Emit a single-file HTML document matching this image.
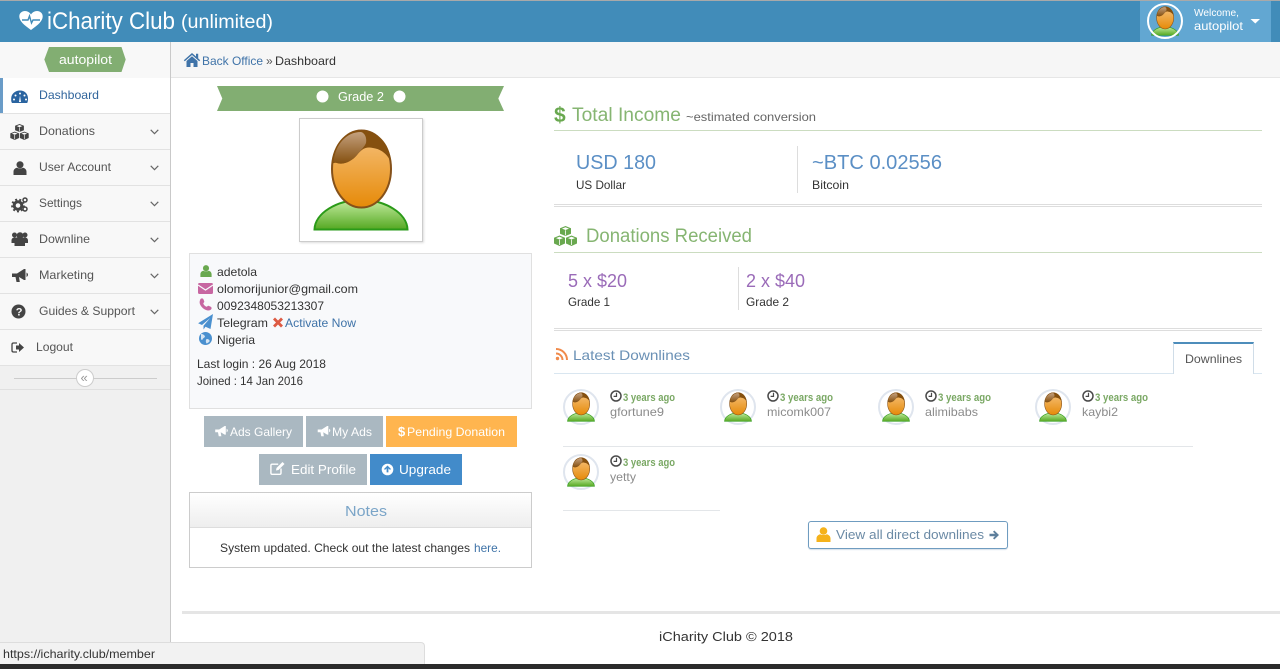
<!DOCTYPE html>
<html lang="en"><head><meta charset="utf-8"><title>iCharity Club</title>
<style>
html,body{margin:0;padding:0;width:1280px;height:669px;overflow:hidden;background:#fff}
.b{position:absolute;box-sizing:border-box}
svg.o{position:absolute;left:0;top:0}
text{font-family:"Liberation Sans",sans-serif;font-size:12px;fill:#333}
.side{fill:#555}.w{fill:#fff}.link{fill:#3f73a8}
.ago{font-size:11px;font-weight:bold;fill:#7aa864}.nm{fill:#8b8b8b}
</style></head><body>
<div class="b" style="left:0;top:0;width:1280px;height:1px;background:#a9a9a9"></div>
<div class="b" style="left:0;top:1px;width:1280px;height:41px;background:#418cb9"></div>
<div class="b" style="left:1140px;top:1px;width:131px;height:41px;background:#62a7d2"></div>
<div class="b" style="left:0;top:42px;width:171px;height:622px;background:#f0f0f0;border-right:1px solid #c9c9c9"></div>
<div class="b" style="left:0;top:42px;width:170px;height:348px;background:#f8f8f8"></div>
<div class="b" style="left:0;top:78px;width:170px;height:36px;background:#fff;border-left:3px solid #6a9cc8;border-bottom:1px solid #e2e2e2"></div>
<div class="b" style="left:0;top:149px;width:170px;height:1px;background:#e2e2e2"></div>
<div class="b" style="left:0;top:113px;width:170px;height:1px;background:#e2e2e2"></div>
<div class="b" style="left:0;top:185px;width:170px;height:1px;background:#e2e2e2"></div>
<div class="b" style="left:0;top:221px;width:170px;height:1px;background:#e2e2e2"></div>
<div class="b" style="left:0;top:257px;width:170px;height:1px;background:#e2e2e2"></div>
<div class="b" style="left:0;top:293px;width:170px;height:1px;background:#e2e2e2"></div>
<div class="b" style="left:0;top:329px;width:170px;height:1px;background:#e2e2e2"></div>
<div class="b" style="left:0;top:365px;width:170px;height:25px;background:#f0f0f0;border-top:1px solid #e2e2e2;border-bottom:1px solid #e0e0e0"></div>
<div class="b" style="left:171px;top:42px;width:1109px;height:36px;background:#f6f6f6;border-bottom:1px solid #e6e6e6"></div>
<div class="b" style="left:299px;top:118px;width:124px;height:124px;background:#fff;border:1px solid #ccc;box-shadow:1px 1px 2px #ddd"></div>
<div class="b" style="left:189px;top:253px;width:343px;height:156px;background:#f8f9fb;border:1px solid #e0e0e0"></div>
<div class="b" style="left:204px;top:416px;width:99px;height:31px;background:#aab8c1"></div>
<div class="b" style="left:306px;top:416px;width:77px;height:31px;background:#aab8c1"></div>
<div class="b" style="left:386px;top:416px;width:131px;height:31px;background:#ffb54f"></div>
<div class="b" style="left:259px;top:454px;width:108px;height:31px;background:#aab8c1"></div>
<div class="b" style="left:370px;top:454px;width:92px;height:31px;background:#428bca"></div>
<div class="b" style="left:189px;top:492px;width:343px;height:76px;background:#fff;border:1px solid #ccc"></div>
<div class="b" style="left:190px;top:493px;width:341px;height:35px;background:linear-gradient(#fff,#eee);border-bottom:1px solid #ddd"></div>
<div class="b" style="left:554px;top:130px;width:708px;height:1px;background:#cbdcc0"></div>
<div class="b" style="left:554px;top:204px;width:708px;height:3px;border-top:1px solid #ddd;border-bottom:1px solid #ddd"></div>
<div class="b" style="left:797px;top:146px;width:1px;height:47px;background:#ddd"></div>
<div class="b" style="left:554px;top:252px;width:708px;height:1px;background:#cbdcc0"></div>
<div class="b" style="left:554px;top:328px;width:708px;height:3px;border-top:1px solid #ddd;border-bottom:1px solid #ddd"></div>
<div class="b" style="left:738px;top:267px;width:1px;height:43px;background:#ddd"></div>
<div class="b" style="left:554px;top:373px;width:708px;height:1px;background:#d9e6f0"></div>
<div class="b" style="left:1173px;top:342px;width:81px;height:32px;background:#fff;border:1px solid #d0dde8;border-top:2px solid #4d8dbb;border-bottom:0"></div>
<div class="b" style="left:563px;top:446px;width:630px;height:1px;background:#e3e6e9"></div>
<div class="b" style="left:563px;top:510px;width:157px;height:1px;background:#e3e6e9"></div>
<div class="b" style="left:808px;top:521px;width:200px;height:28px;background:#fff;border:1px solid #6f9cc0;border-radius:3px;box-shadow:0 1px 1px #d5dfe8"></div>
<div class="b" style="left:182px;top:611px;width:1098px;height:3px;background:#e5e5e5"></div>
<div class="b" style="left:0;top:642px;width:425px;height:23px;background:#f2f2f2;border:1px solid #ddd;border-left:0;border-bottom:0;border-radius:0 4px 0 0"></div>
<div class="b" style="left:0;top:664px;width:1280px;height:5px;background:#2b2b2b"></div>

<svg class="o" width="1280" height="669" viewBox="0 0 1280 669" xmlns="http://www.w3.org/2000/svg">
<defs>
<linearGradient id="face" x1="0" y1="0" x2="0" y2="1"><stop offset="0" stop-color="#f6c27e"/><stop offset="1" stop-color="#e68a08"/></linearGradient>
<linearGradient id="shirt" x1="0" y1="0" x2="0" y2="1"><stop offset="0" stop-color="#c4eca0"/><stop offset="1" stop-color="#55a822"/></linearGradient>
<linearGradient id="hair" x1="0" y1="0" x2="0" y2="1"><stop offset="0" stop-color="#c4a07e"/><stop offset="1" stop-color="#85500f"/></linearGradient>
<symbol id="av" viewBox="0 0 124 124">
<path d="M15.500 111.500C16 95 38 82 62 82s46 13 46.500 29.500z" fill="url(#shirt)" stroke="#2a9a18" stroke-width="2"/>
<ellipse cx="62.500" cy="51" rx="29.500" ry="38.500" fill="url(#face)" stroke="#85511a" stroke-width="2"/>
<path d="M33 46C34 26 46 12.500 62.500 12.500 79 12.500 91 26 92 44 88 36 82 31 74 30 66 28 62 32 58 37 52 44 44 47 38 45 36 44.500 34 45 33 46z" fill="#85500f"/>
<path d="M34.500 44C36 27 47 14 62 14 66 15 68 20 67 25 66 28 62 32 58 37 52 44 44 47 38 45z" fill="url(#hair)"/>
</symbol>
<symbol id="cubes" viewBox="0 0 24 20">
<path d="M12 0l5.500 2.200v5.600L12 10 6.500 7.800V2.200zM6 9.500l5.500 2.200v5.800L6 20 .5 17.500v-5.800zM18 9.500l5.500 2.200v5.800L18 20l-5.500-2.500v-5.800z"/>
<path d="M12 1.300l3.500 1.300L12 4 8.500 2.600zM6 10.800l3.500 1.300L6 13.500 2.500 12.100zM18 10.800l3.500 1.300L18 13.500l-3.500-1.400z" fill="#fff"/>
<path d="M12 4.300v5M6 13.800V19M18 13.800V19" fill="none" stroke="#fff" stroke-width=".8"/>
</symbol>
<symbol id="user" viewBox="0 0 14 15"><circle cx="7" cy="4" r="3.800"/><path d="M0 15v-3.500C0 9 2 7.500 3.800 7.200 5 8.200 9 8.200 10.200 7.200 12 7.500 14 9 14 11.500V15z"/></symbol>
<symbol id="horn" viewBox="0 0 16 14"><path d="M0 4.500h5L12 0h1.500v11H12L7 8l.8 5H4.500L3.500 8H0z"/><path d="M14.500 3.500c2 1 2 3.500 0 4.500z"/></symbol>
<symbol id="clock" viewBox="0 0 12 12"><circle cx="6" cy="6" r="5" fill="none" stroke="#4a4a4a" stroke-width="1.500"/><path d="M6.500 2.800v3.600H3.600" fill="none" stroke="#4a4a4a" stroke-width="1.200"/></symbol>
<symbol id="chev" viewBox="0 0 9 6"><path d="M.7 .8L4.500 4.700 8.300 .8" fill="none" stroke="#666" stroke-width="1.200"/></symbol>
</defs>

<!-- header -->
<path d="M31 30C24 25 19.300 21 19.300 16.500 19.300 13 22 11 25 11 27.500 11 29.800 12.500 31 14.500 32.200 12.500 34.500 11 37 11 40 11 42.700 13 42.700 16.500 42.700 21 38 25 31 30z" fill="#fff"/>
<path d="M22 20h6l1.500-4 2 7 1.500-3h7" fill="none" stroke="#418cb9" stroke-width="1.400"/>
<text x="47" y="29" textLength="128" lengthAdjust="spacingAndGlyphs" class="w" style="font-size:24px">iCharity Club</text>
<text x="181" y="28" textLength="92" lengthAdjust="spacingAndGlyphs" class="w" style="font-size:19px">(unlimited)</text>
<use href="#av" x="1147" y="3" width="36" height="36"/>
<circle cx="1165" cy="21" r="17" fill="none" stroke="#fff" stroke-width="2"/>
<text x="1194" y="16" textLength="45" lengthAdjust="spacingAndGlyphs" class="w" style="font-size:10px">Welcome,</text>
<text x="1194" y="30" textLength="49" lengthAdjust="spacingAndGlyphs" class="w" style="font-size:12px">autopilot</text>
<path d="M1250.500 19h9.500l-4.700 4.500z" fill="#fff"/>

<!-- sidebar -->
<path d="M44.300 59.500L49 47h72.500l4.200 12.500-4.200 12.500H49z" fill="#82ae72"/>
<text x="59" y="64" textLength="53" lengthAdjust="spacingAndGlyphs" class="w" style="font-size:13px">autopilot</text>
<path d="M12 103c-1-1.500-.8-3-.8-4.500C11.200 94 15 90.500 20 90.500s8 3.500 8 8c0 1.500 0 3-.8 4.500z" fill="#2a64a0"/>
<circle cx="20" cy="93.500" r="1" fill="#fff"/><circle cx="15.500" cy="95.500" r="1" fill="#fff"/><circle cx="24.500" cy="95.500" r="1" fill="#fff"/><circle cx="14" cy="99.500" r="1" fill="#fff"/><circle cx="26" cy="99.500" r="1" fill="#fff"/><path d="M19 102l1-6.500 1 6.500z" fill="#fff"/>
<text x="39" y="99" textLength="60" lengthAdjust="spacingAndGlyphs" style="fill:#31659c">Dashboard</text>
<use href="#cubes" x="9.500" y="124" width="20" height="16" fill="#444"/>
<text x="39" y="135" textLength="56" lengthAdjust="spacingAndGlyphs" class="side">Donations</text>
<use href="#user" x="13.500" y="161" width="13" height="14" fill="#444"/>
<text x="39" y="171" textLength="72" lengthAdjust="spacingAndGlyphs" class="side">User Account</text>
<circle cx="18" cy="205.500" r="3.800" fill="none" stroke="#444" stroke-width="3"/><circle cx="18" cy="205.500" r="6" fill="none" stroke="#444" stroke-width="1.800" stroke-dasharray="2 2.200"/>
<circle cx="25" cy="200" r="2" fill="none" stroke="#444" stroke-width="1.500"/><circle cx="25" cy="209" r="2" fill="none" stroke="#444" stroke-width="1.500"/>
<text x="39" y="207" textLength="43" lengthAdjust="spacingAndGlyphs" class="side">Settings</text>
<g fill="#444"><circle cx="14.500" cy="235" r="2.500"/><circle cx="25" cy="235" r="2.500"/><circle cx="20" cy="235.500" r="3.300"/><path d="M11.500 243v-2.500c0-2 1.500-3 3-3h10.500c1.500 0 3 1 3 3v2.500h-3v3h-10.500v-3z"/></g>
<text x="39" y="243" textLength="51" lengthAdjust="spacingAndGlyphs" class="side">Downline</text>
<use href="#horn" x="12" y="269" width="16" height="14" fill="#444"/>
<text x="39" y="279" textLength="55" lengthAdjust="spacingAndGlyphs" class="side">Marketing</text>
<circle cx="18.500" cy="311.500" r="7" fill="#444"/><text x="15.700" y="315.500" style="font-size:11px;font-weight:bold;fill:#f8f8f8">?</text>
<text x="39" y="315" textLength="96" lengthAdjust="spacingAndGlyphs" class="side">Guides &amp; Support</text>
<path d="M17 343h-3.500c-1 0-1.500.7-1.500 1.500v6c0 1 .5 1.500 1.500 1.500h3.500" fill="none" stroke="#444" stroke-width="1.300"/><path d="M16 345.500h3v-2.500l5 4.500-5 4.500v-2.500h-3z" fill="#444"/>
<text x="36" y="351" textLength="37" lengthAdjust="spacingAndGlyphs" class="side">Logout</text>
<use href="#chev" x="150" y="129" width="9" height="6"/><use href="#chev" x="150" y="165" width="9" height="6"/><use href="#chev" x="150" y="201" width="9" height="6"/><use href="#chev" x="150" y="237" width="9" height="6"/><use href="#chev" x="150" y="273" width="9" height="6"/><use href="#chev" x="150" y="309" width="9" height="6"/>
<path d="M14 378.500h143" stroke="#ccc"/><circle cx="85" cy="378" r="8.500" fill="#fff" stroke="#ccc"/>
<text x="80.500" y="382" style="font-size:13px;fill:#999">«</text>

<!-- breadcrumb -->
<path d="M192 53l4 3.500V53.800h2.200v4.600l2 1.800-1 1-7.200-6.200-7.200 6.200-1-1zM186.500 61l5.500-4.800 5.500 4.800v6h-4v-4h-3v4h-4z" fill="#3f73a8"/>
<text x="202" y="65" textLength="61" lengthAdjust="spacingAndGlyphs" class="link">Back Office</text>
<text x="266" y="65" style="fill:#555">»</text>
<text x="275" y="65" textLength="61" lengthAdjust="spacingAndGlyphs">Dashboard</text>

<!-- profile -->
<path d="M217 86h287l-5.700 12.500 5.700 12.500H217l5.300-12.500z" fill="#82ae72"/>
<circle cx="322.500" cy="96.500" r="6" fill="#fff"/><circle cx="399.500" cy="96.500" r="6" fill="#fff"/>
<text x="338" y="101" textLength="46" lengthAdjust="spacingAndGlyphs" class="w" style="font-size:13px">Grade 2</text>
<use href="#av" x="299" y="118" width="124" height="124"/>

<use href="#user" x="200" y="265" width="12" height="12" fill="#69a84f"/>
<text x="217" y="276" textLength="40" lengthAdjust="spacingAndGlyphs">adetola</text>
<rect x="198" y="283" width="15" height="11" rx="1.500" fill="#c766a1"/><path d="M198 285l7.500 5 7.500-5" fill="none" stroke="#f8f9fb" stroke-width="1.200"/>
<text x="217" y="293" textLength="141" lengthAdjust="spacingAndGlyphs">olomorijunior@gmail.com</text>
<path d="M200.500 299c1-.8 2-.8 2.800 0l1 2.500c0 1-1 1.200-1 2 .3 1.300 2 3 3.200 3.200.8 0 1-1 2-1l2.500 1.200c.8.800.8 1.800 0 2.600-1 1-3 1.300-5 .5-3-1.300-5.500-3.800-6.300-6.800-.3-1.500.3-3.200.8-4.200z" fill="#c766a1"/>
<text x="217" y="310" textLength="107" lengthAdjust="spacingAndGlyphs">0092348053213307</text>
<path d="M213 314l-2.500 15-5-2.300-2 2.800v-3.800l6.700-7.700-8.200 7-3.900-1.800z" fill="#4a90cf"/>
<text x="217" y="327" textLength="51" lengthAdjust="spacingAndGlyphs">Telegram</text>
<path d="M273 319.500l2-2 3 3 3-3 2 2-3 3 3 3-2 2-3-3-3 3-2-2 3-3z" fill="#dd5a43"/>
<text x="285" y="327" textLength="71" lengthAdjust="spacingAndGlyphs" class="link">Activate Now</text>
<circle cx="205.500" cy="338.500" r="6.500" fill="#4a90cf"/><path d="M201 334c2 0 3.500 1 4 2.500-.5 1.500-2 1.500-2.500 3-.2 1-1 .5-1.500-.5zM206.500 339c2 0 3.500 1 3 2.500-1 1-2 1.800-3 2-.8-1.500-1-3 0-4.500z" fill="#d6e5f3"/>
<text x="217" y="344" textLength="38" lengthAdjust="spacingAndGlyphs">Nigeria</text>
<text x="197" y="368" textLength="129" lengthAdjust="spacingAndGlyphs">Last login : 26 Aug 2018</text>
<text x="197" y="385" textLength="106" lengthAdjust="spacingAndGlyphs">Joined : 14 Jan 2016</text>

<use href="#horn" x="215" y="426" width="13" height="11" fill="#fff"/>
<text x="230" y="436" textLength="62" lengthAdjust="spacingAndGlyphs" class="w">Ads Gallery</text>
<use href="#horn" x="317.500" y="426" width="13" height="11" fill="#fff"/>
<text x="332" y="436" textLength="40" lengthAdjust="spacingAndGlyphs" class="w">My Ads</text>
<text x="398" y="436" class="w" style="font-weight:bold;font-size:13px">$</text>
<text x="407" y="436" textLength="98" lengthAdjust="spacingAndGlyphs" class="w">Pending Donation</text>
<path d="M281 468.500v4.500c0 .8-.5 1.300-1.300 1.300h-7.500c-.8 0-1.300-.5-1.300-1.300v-7.500c0-.8.500-1.300 1.300-1.300h6" fill="none" stroke="#fff" stroke-width="1.400"/><path d="M276 470.500l.5-2.500 6-6 2 2-6 6z" fill="#fff"/>
<text x="291" y="474" textLength="65" lengthAdjust="spacingAndGlyphs" class="w" style="font-size:13px">Edit Profile</text>
<circle cx="387.500" cy="469.500" r="5.800" fill="#fff"/><path d="M387.500 465.500l3.500 3.500-1 .9-1.600-1.500v4h-1.800v-4l-1.600 1.500-1-.9z" fill="#428bca"/>
<text x="399" y="474" textLength="52" lengthAdjust="spacingAndGlyphs" class="w" style="font-size:13px">Upgrade</text>
<text x="345" y="516" textLength="42" lengthAdjust="spacingAndGlyphs" style="font-size:15px;fill:#7ba5c8">Notes</text>
<text x="220" y="552" textLength="250" lengthAdjust="spacingAndGlyphs">System updated. Check out the latest changes</text>
<text x="474" y="552" textLength="27" lengthAdjust="spacingAndGlyphs" class="link">here.</text>

<!-- right column -->
<text x="554" y="122" style="font-size:21px;font-weight:bold;fill:#69a84f">$</text>
<text x="572" y="121" textLength="109" lengthAdjust="spacingAndGlyphs" style="font-size:19px;fill:#86b572">Total Income</text>
<text x="686" y="121" textLength="130" lengthAdjust="spacingAndGlyphs" style="fill:#666">~estimated conversion</text>
<text x="576" y="169" textLength="80" lengthAdjust="spacingAndGlyphs" style="font-size:20px;fill:#5b8fc5">USD 180</text>
<text x="576" y="189" textLength="50" lengthAdjust="spacingAndGlyphs">US Dollar</text>
<text x="812" y="169" textLength="130" lengthAdjust="spacingAndGlyphs" style="font-size:20px;fill:#5b8fc5">~BTC 0.02556</text>
<text x="812" y="189" textLength="37" lengthAdjust="spacingAndGlyphs">Bitcoin</text>
<use href="#cubes" x="553" y="226" width="25" height="20" fill="#69a84f"/>
<text x="586" y="242" textLength="166" lengthAdjust="spacingAndGlyphs" style="font-size:19px;fill:#86b572">Donations Received</text>
<text x="568" y="287" textLength="59" lengthAdjust="spacingAndGlyphs" style="font-size:18px;fill:#9a6bb8">5 x $20</text>
<text x="568" y="306" textLength="42" lengthAdjust="spacingAndGlyphs">Grade 1</text>
<text x="746" y="287" textLength="59" lengthAdjust="spacingAndGlyphs" style="font-size:18px;fill:#9a6bb8">2 x $40</text>
<text x="746" y="306" textLength="43" lengthAdjust="spacingAndGlyphs">Grade 2</text>

<g fill="none" stroke="#f08a4b" stroke-width="2"><path d="M556 349a11 11 0 0 1 11 11"/><path d="M556 353.500a6.500 6.500 0 0 1 6.500 6.500"/></g><circle cx="557.500" cy="358.500" r="1.700" fill="#f08a4b"/>
<text x="573" y="360" textLength="117" lengthAdjust="spacingAndGlyphs" style="font-size:14px;fill:#6a90b5">Latest Downlines</text>
<text x="1185" y="363" textLength="57" lengthAdjust="spacingAndGlyphs" style="fill:#555">Downlines</text>

<g fill="#fff" stroke="#dfe5ee" stroke-width="2"><circle cx="581" cy="407" r="17"/><circle cx="738" cy="407" r="17"/><circle cx="896" cy="407" r="17"/><circle cx="1053" cy="407" r="17"/><circle cx="581" cy="472" r="17"/></g>
<use href="#av" x="563" y="389" width="36" height="36"/><use href="#av" x="720" y="389" width="36" height="36"/><use href="#av" x="878" y="389" width="36" height="36"/><use href="#av" x="1035" y="389" width="36" height="36"/><use href="#av" x="563" y="454" width="36" height="36"/>
<use href="#clock" x="610" y="390" width="12" height="12"/><use href="#clock" x="767" y="390" width="12" height="12"/><use href="#clock" x="925" y="390" width="12" height="12"/><use href="#clock" x="1082" y="390" width="12" height="12"/><use href="#clock" x="610" y="455" width="12" height="12"/>
<text x="623" y="401" textLength="52" lengthAdjust="spacingAndGlyphs" class="ago">3 years ago</text>
<text x="610" y="416" textLength="54" lengthAdjust="spacingAndGlyphs" class="nm">gfortune9</text>
<text x="780" y="401" textLength="53" lengthAdjust="spacingAndGlyphs" class="ago">3 years ago</text>
<text x="767" y="416" textLength="64" lengthAdjust="spacingAndGlyphs" class="nm">micomk007</text>
<text x="938" y="401" textLength="53" lengthAdjust="spacingAndGlyphs" class="ago">3 years ago</text>
<text x="925" y="416" textLength="53" lengthAdjust="spacingAndGlyphs" class="nm">alimibabs</text>
<text x="1095" y="401" textLength="53" lengthAdjust="spacingAndGlyphs" class="ago">3 years ago</text>
<text x="1082" y="416" textLength="36" lengthAdjust="spacingAndGlyphs" class="nm">kaybi2</text>
<text x="623" y="466" textLength="52" lengthAdjust="spacingAndGlyphs" class="ago">3 years ago</text>
<text x="610" y="481" textLength="26" lengthAdjust="spacingAndGlyphs" class="nm">yetty</text>
<use href="#user" x="816" y="527" width="15" height="15" fill="#f5b21b"/>
<text x="836" y="539" textLength="148" lengthAdjust="spacingAndGlyphs" style="font-size:13px;fill:#6b8aa5">View all direct downlines</text>
<path d="M989.500 533.800h5.500l-2-2 1.300-1.300 4.700 4.500-4.700 4.500-1.300-1.300 2-2h-5.500z" fill="#5d7f9c"/>

<text x="659" y="641" textLength="134" lengthAdjust="spacingAndGlyphs" style="font-size:13px">iCharity Club © 2018</text>
<text x="3" y="658" textLength="152" lengthAdjust="spacingAndGlyphs">https://icharity.club/member</text>
</svg>
</body></html>
